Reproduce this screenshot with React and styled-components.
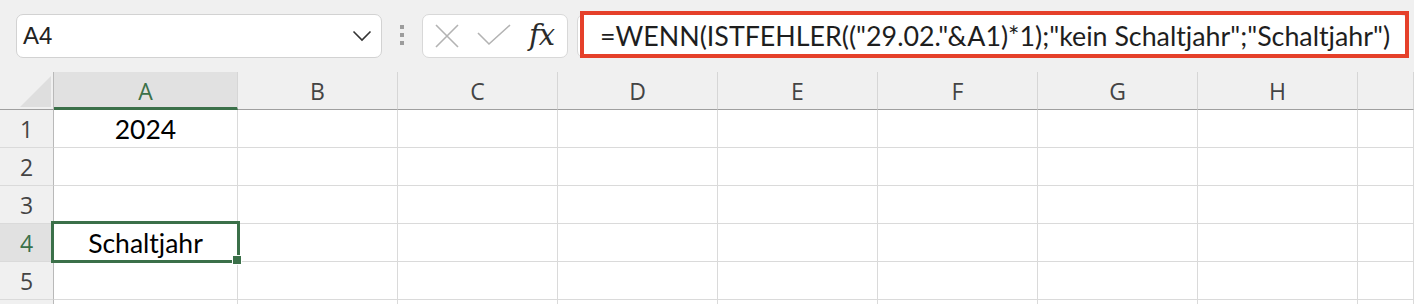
import React from "react";
import styled, { createGlobalStyle } from "styled-components";

const GlobalStyle = createGlobalStyle`
  html, body { margin: 0; padding: 0; background: #f0f0f0; overflow: hidden; }
  body { font-family: "Open Sans", "Noto Sans", sans-serif; }
  * { box-sizing: border-box; }
`;

const GREEN = "#3b7049";

const Page = styled.div`
  width: 1414px;
  height: 304px;
  overflow: hidden;
  background: #f0f0f0;
`;

const Toolbar = styled.div`
  display: flex;
  align-items: stretch;
  height: 44px;
  margin-top: 14px;
  padding-left: 16px;
  padding-right: 6px;
`;

const NameBox = styled.div`
  width: 366px;
  display: flex;
  align-items: center;
  justify-content: space-between;
  padding: 0 9px 0 6px;
  background: #fff;
  border: 1px solid #d2d2d2;
  border-radius: 7px;
  font-family: "Liberation Sans", Arial, sans-serif;
  font-size: 24px;
  color: #222;
`;

const Grip = styled.div`
  width: 40px;
  display: flex;
  flex-direction: column;
  align-items: center;
  justify-content: center;
  gap: 4px;
  padding-bottom: 2px;
`;

const GripDot = styled.span`
  width: 4px;
  height: 4px;
  background: #9c9c9c;
`;

const FxBox = styled.div`
  width: 146px;
  display: flex;
  align-items: center;
  padding-left: 12px;
  gap: 18px;
  background: #fff;
  border: 1px solid #d8d8d8;
  border-radius: 7px;
`;

const FxLabel = styled.span`
  font-family: "DejaVu Serif", "Liberation Serif", serif;
  font-style: italic;
  font-weight: normal;
  font-size: 29px;
  color: #2b2b2b;
  line-height: 1;
  margin-top: -2px;
  letter-spacing: -1px;
`;

const FormulaBox = styled.div`
  position: relative;
  flex: 1;
  margin-left: 9px;
  display: flex;
  align-items: center;
  padding-left: 22px;
  background: #fff;
  border: 1px solid #d8d8d8;
  border-radius: 7px;
  font-family: "Lato", "Open Sans", sans-serif;
  font-size: 26.8px;
  color: #1e1e1e;
  white-space: nowrap;
`;

const Highlight = styled.span`
  position: absolute;
  left: 2px;
  top: -4px;
  right: -2px;
  bottom: -1px;
  border: 4px solid #e5402a;
  pointer-events: none;
`;

const Sheet = styled.div`
  margin-top: 14px;
  display: grid;
  grid-template-columns: 54px 184px repeat(7, 160px) 1fr;
  grid-auto-rows: 38px;
`;

const Corner = styled.div`
  position: relative;
  background: #f0f0f0;
  border-right: 1px solid #b9b9b9;
  border-bottom: 1px solid #9f9f9f;
`;

const CornerTriangle = styled.svg`
  position: absolute;
  left: 20px;
  top: 4px;
`;

const ColHeader = styled.div`
  display: flex;
  align-items: center;
  justify-content: center;
  background: ${(p) => (p.$active ? "#e1e1e1" : "#f0f0f0")};
  color: ${(p) => (p.$active ? GREEN : "#444")};
  border-right: 1px solid #d6d6d6;
  border-bottom: ${(p) => (p.$active ? `3px solid ${GREEN}` : "1px solid #9f9f9f")};
  padding-top: ${(p) => (p.$active ? "2px" : "0")};
  font-family: "Open Sans", "Noto Sans", sans-serif;
  font-size: 23px;
`;

const RowHeader = styled.div`
  display: flex;
  align-items: center;
  justify-content: center;
  background: ${(p) => (p.$active ? "#e1e1e1" : "#f0f0f0")};
  color: ${(p) => (p.$active ? GREEN : "#444")};
  border-right: 1px solid #b9b9b9;
  border-bottom: 1px solid #dadada;
  font-family: "Open Sans", "Noto Sans", sans-serif;
  font-size: 23px;
`;

const Cell = styled.div`
  position: relative;
  display: flex;
  align-items: center;
  justify-content: center;
  background: #fff;
  border-right: 1px solid #dadada;
  border-bottom: 1px solid #dadada;
  font-family: "Lato", "Open Sans", sans-serif;
  font-size: 26.5px;
  color: #000;
  z-index: ${(p) => (p.$selected ? 2 : 0)};
`;

const Selection = styled.span`
  position: absolute;
  left: -3px;
  top: -3px;
  right: -3px;
  bottom: -2px;
  border: 3px solid ${GREEN};
  pointer-events: none;
`;

const FillHandle = styled.span`
  position: absolute;
  right: -5px;
  bottom: -5px;
  width: 10px;
  height: 10px;
  background: ${GREEN};
  border: 1px solid #fff;
`;

const columns = ["A", "B", "C", "D", "E", "F", "G", "H", ""];
const data = { A1: "2024", A4: "Schaltjahr" };
const activeCol = "A";
const activeRow = 4;
const rows = [1, 2, 3, 4, 5, 6];
const lastVisibleRow = 5;

function Chevron() {
  return (
    <svg width="20" height="12" viewBox="0 0 20 12">
      <path d="M1.5 1.5 L10 10 L18.5 1.5" fill="none" stroke="#333" strokeWidth="1.6" />
    </svg>
  );
}

function CancelIcon() {
  return (
    <svg width="24" height="24" viewBox="0 0 24 24">
      <path d="M1 1 L23 23 M23 1 L1 23" stroke="#b3b3b3" strokeWidth="1.6" fill="none" />
    </svg>
  );
}

function EnterIcon() {
  return (
    <svg width="34" height="24" viewBox="0 0 34 24">
      <path d="M1 9 L12 20 L33 1" stroke="#b3b3b3" strokeWidth="1.6" fill="none" />
    </svg>
  );
}

export default function App() {
  return (
    <Page>
      <GlobalStyle />
      <Toolbar>
        <NameBox>
          <span>A4</span>
          <Chevron />
        </NameBox>
        <Grip>
          <GripDot />
          <GripDot />
          <GripDot />
        </Grip>
        <FxBox>
          <CancelIcon />
          <EnterIcon />
          <FxLabel>fx</FxLabel>
        </FxBox>
        <FormulaBox>
          =WENN(ISTFEHLER(("29.02."&amp;A1)*1);"kein Schaltjahr";"Schaltjahr")
          <Highlight />
        </FormulaBox>
      </Toolbar>
      <Sheet>
        <Corner>
          <CornerTriangle width="31" height="31" viewBox="0 0 31 31">
            <polygon points="31,0 31,31 0,31" fill="#dedede" />
          </CornerTriangle>
        </Corner>
        {columns.map((c, i) => (
          <ColHeader key={"h" + i} $active={c === activeCol}>
            {c}
          </ColHeader>
        ))}
        {rows.map((r) => (
          <React.Fragment key={r}>
            <RowHeader $active={r === activeRow}>{r <= lastVisibleRow ? r : null}</RowHeader>
            {columns.map((c, i) => {
              const id = c + r;
              const selected = c === activeCol && r === activeRow;
              return (
                <Cell key={id + i} $selected={selected}>
                  {c ? data[id] : null}
                  {selected && (
                    <Selection>
                      <FillHandle />
                    </Selection>
                  )}
                </Cell>
              );
            })}
          </React.Fragment>
        ))}
      </Sheet>
    </Page>
  );
}
